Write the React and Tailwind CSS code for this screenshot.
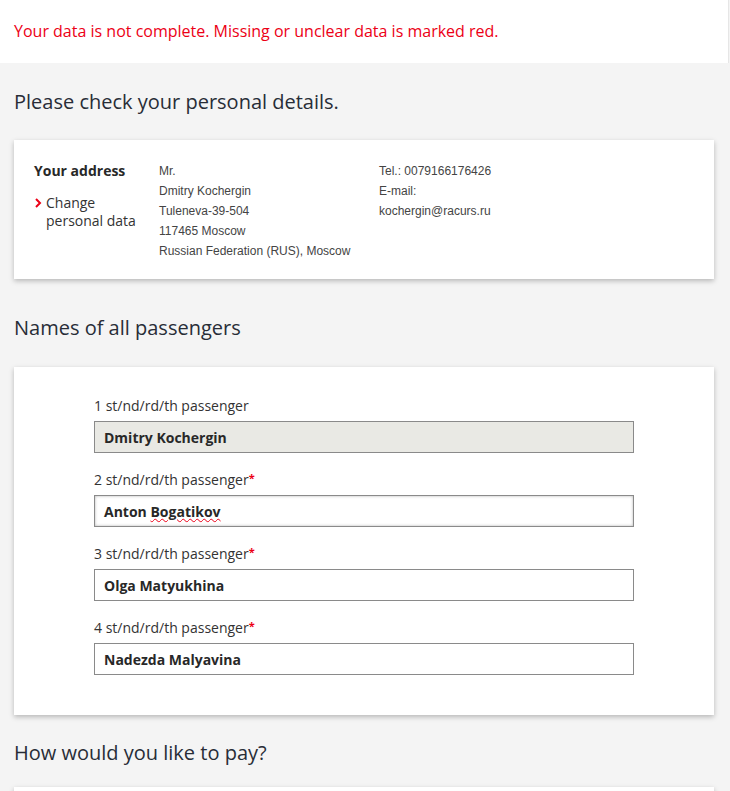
import React from "react";

const head = { fontFamily: '"Open Sans", "Noto Sans", sans-serif' };
const sans = { fontFamily: '"Open Sans", "Noto Sans", sans-serif' };
const arial = { fontFamily: '"Liberation Sans", Arial, sans-serif' };

function Field({ n, value, disabled, focus, required }) {
  return (
    <div className="flex flex-col">
      <div className="text-[14px] leading-[20px] text-[#333]" style={sans}>
        {n} st/nd/rd/th passenger
        {required && <span className="text-[#ec0016] text-[11px] font-bold align-top relative top-[-2px]">*</span>}
      </div>
      <div
        className={
          "mt-[5px] h-[32px] w-[540px] border border-[#8a8a8a] flex items-center px-[9px] text-[14px] font-bold text-[#282828] " +
          (disabled ? "bg-[#e9e9e4]" : "bg-white") +
          (focus ? " shadow-[inset_0_0_3px_rgba(0,0,0,0.3)]" : "")
        }
        style={sans}
      >
        {focus ? (
          <span>
            Anton <span className="underline decoration-wavy decoration-[#ec0016] decoration-1">Bogatikov</span>
          </span>
        ) : (
          value
        )}
      </div>
    </div>
  );
}

export default function App() {
  return (
    <div className="w-[730px] h-[791px] bg-[#f4f4f4] overflow-hidden">
      <div className="bg-white h-[63px] px-[14px] pt-[20px] border-r border-[#e6e6e6] w-[729px]">
        <p className="text-[16px] leading-[22px] text-[#ec0016]" style={head}>
          Your data is not complete. Missing or unclear data is marked red.
        </p>
      </div>
      <div className="px-[14px] w-[728px]">
        <h2 className="text-[20px] leading-[28px] text-[#282d37] pt-[25px] pb-[24px]" style={head}>
          Please check your personal details.
        </h2>
        <div className="bg-white shadow-[0_2px_5px_rgba(0,0,0,0.25)] h-[139px] flex pl-[20px] pt-[21px]">
          <div className="w-[125px]" style={sans}>
            <div className="text-[14px] font-bold text-[#282828] leading-[20px]">Your address</div>
            <div className="flex mt-[13px] text-[14px] text-[#333]">
              <svg className="w-[12px] h-[18px] shrink-0" viewBox="0 0 12 18">
                <path d="M2 5 L6 9 L2 13" fill="none" stroke="#ec0016" strokeWidth="2" />
              </svg>
              <div className="flex flex-col">
                <span className="leading-[18px]">Change</span>
                <span className="leading-[18px]">personal data</span>
              </div>
            </div>
          </div>
          <div className="w-[220px] text-[12px] leading-[20px] text-[#444]" style={arial}>
            <div>Mr.</div>
            <div>Dmitry Kochergin</div>
            <div>Tuleneva-39-504</div>
            <div>117465 Moscow</div>
            <div>Russian Federation (RUS), Moscow</div>
          </div>
          <div className="text-[12px] leading-[20px] text-[#444]" style={arial}>
            <div>Tel.: 0079166176426</div>
            <div>E-mail:</div>
            <div>kochergin@racurs.ru</div>
          </div>
        </div>
        <h2 className="text-[20px] leading-[28px] text-[#282d37] pt-[35px] pb-[25px]" style={head}>
          Names of all passengers
        </h2>
        <div className="bg-white shadow-[0_2px_5px_rgba(0,0,0,0.25)] h-[348px] pl-[80px] pt-[29px] flex flex-col gap-[17px]">
          <Field n={1} value="Dmitry Kochergin" disabled />
          <Field n={2} value="Anton Bogatikov" focus required />
          <Field n={3} value="Olga Matyukhina" required />
          <Field n={4} value="Nadezda Malyavina" required />
        </div>
        <h2 className="text-[20px] leading-[28px] text-[#282d37] pt-[24px] pb-[20px]" style={head}>
          How would you like to pay?
        </h2>
        <div className="bg-white shadow-[0_2px_5px_rgba(0,0,0,0.25)] h-[100px]"></div>
      </div>
    </div>
  );
}
